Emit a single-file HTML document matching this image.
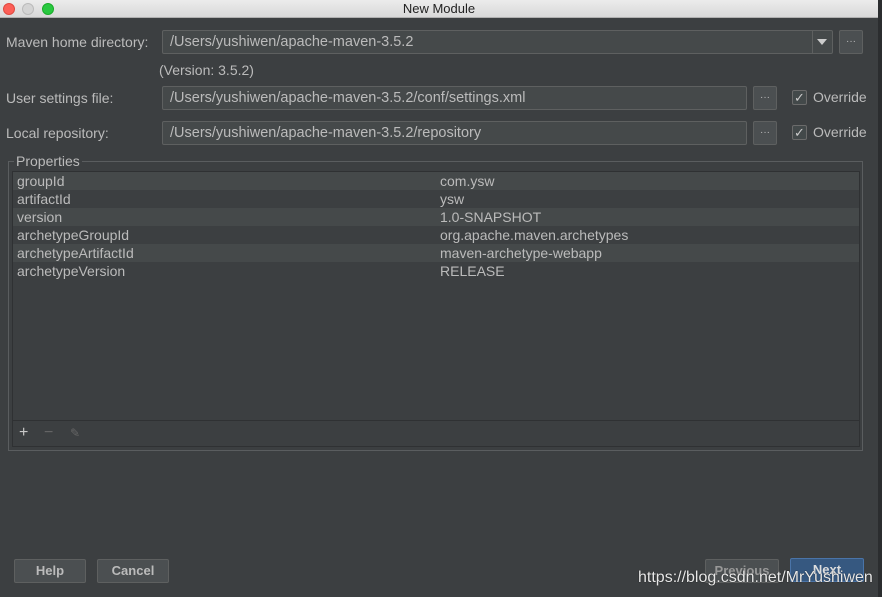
<!DOCTYPE html>
<html><head><style>
*{box-sizing:border-box;margin:0;padding:0}
body{width:882px;height:597px;background:#2b2d2f;font-family:"Liberation Sans",sans-serif;font-size:14px;color:#bbbbbb;position:relative;overflow:hidden}
.win{position:absolute;left:0;top:0;width:878px;height:597px;background:#3c3f41}
.title{position:absolute;left:0;top:0;width:878px;height:18px;background:linear-gradient(#ececec,#d8d8d8);border-bottom:1px solid #b0b0b0;color:#222;text-align:center;font-size:13px;line-height:18px}
.dot{position:absolute;top:3px;width:12px;height:12px;border-radius:50%}
.a{position:absolute}
.field{position:absolute;background:#45494a;border:1px solid #5e6060;border-radius:2px;height:24px;line-height:22px;padding-left:7px;color:#bbb;font-size:14.5px}
.btn{position:absolute;background:#4b4f51;border:1px solid #5e6060;border-radius:2px;height:24px;text-align:center;line-height:22px;color:#bbb;font-size:13px}
.chk{position:absolute;width:15px;height:15px;border:1px solid #6b6b6b;background:#43494a;border-radius:2px;font-size:13px;line-height:13px;text-align:center;color:#ccc}
.row{position:absolute;left:13px;width:846px;height:18px;line-height:18px}
.row span{position:absolute}
</style></head><body>
<div class="win">
<div class="title">New Module
<div class="dot" style="left:3px;background:#fc5f57;border:1px solid #de4a41"></div>
<div class="dot" style="left:22px;background:#d4d4d4;border:1px solid #bbb"></div>
<div class="dot" style="left:42px;background:#29c840;border:1px solid #1aab29"></div>
</div>
<div class="a" style="left:6px;top:34px">Maven home directory:</div>
<div class="field" style="left:162px;top:30px;width:671px">/Users/yushiwen/apache-maven-3.5.2</div>
<div class="a" style="left:812px;top:31px;width:20px;height:22px;border-left:1px solid #5e6060"></div>
<div class="a" style="left:817px;top:39px;width:0;height:0;border-left:5px solid transparent;border-right:5px solid transparent;border-top:6px solid #ccc"></div>
<div class="btn" style="left:839px;top:30px;width:24px;font-size:10px">···</div>
<div class="a" style="left:159px;top:62px">(Version: 3.5.2)</div>
<div class="a" style="left:6px;top:90px">User settings file:</div>
<div class="field" style="left:162px;top:86px;width:585px">/Users/yushiwen/apache-maven-3.5.2/conf/settings.xml</div>
<div class="btn" style="left:753px;top:86px;width:24px;font-size:10px">···</div>
<div class="chk" style="left:792px;top:90px">✓</div>
<div class="a" style="left:813px;top:89px">Override</div>
<div class="a" style="left:6px;top:125px">Local repository:</div>
<div class="field" style="left:162px;top:121px;width:585px">/Users/yushiwen/apache-maven-3.5.2/repository</div>
<div class="btn" style="left:753px;top:121px;width:24px;font-size:10px">···</div>
<div class="chk" style="left:792px;top:125px">✓</div>
<div class="a" style="left:813px;top:124px">Override</div>
<div class="a" style="left:8px;top:161px;width:855px;height:290px;border:1px solid #5a5d5f"></div>
<div class="a" style="left:14px;top:153px;background:#3c3f41;padding:0 2px">Properties</div>
<div class="a" style="left:12px;top:171px;width:848px;height:276px;border:1px solid #2f3133;background:#3c3f41"></div>
<div class="row" style="top:172px;background:#45494a"><span style="left:4px">groupId</span><span style="left:427px">com.ysw</span></div>
<div class="row" style="top:190px"><span style="left:4px">artifactId</span><span style="left:427px">ysw</span></div>
<div class="row" style="top:208px;background:#45494a"><span style="left:4px">version</span><span style="left:427px">1.0-SNAPSHOT</span></div>
<div class="row" style="top:226px"><span style="left:4px">archetypeGroupId</span><span style="left:427px">org.apache.maven.archetypes</span></div>
<div class="row" style="top:244px;background:#45494a"><span style="left:4px">archetypeArtifactId</span><span style="left:427px">maven-archetype-webapp</span></div>
<div class="row" style="top:262px"><span style="left:4px">archetypeVersion</span><span style="left:427px">RELEASE</span></div>
<div class="a" style="left:13px;top:420px;width:846px;height:1px;background:#2f3133"></div>
<div class="a" style="left:19px;top:424px;font-size:16px;color:#c8c8c8">+</div>
<div class="a" style="left:44px;top:424px;font-size:16px;color:#666">−</div>
<div class="a" style="left:70px;top:426px;font-size:12px;color:#666">✎</div>
<div class="btn" style="left:14px;top:559px;width:72px;font-weight:bold">Help</div>
<div class="btn" style="left:97px;top:559px;width:72px;font-weight:bold">Cancel</div>
<div class="btn" style="left:705px;top:559px;width:74px;font-weight:bold;color:#999">Previous</div>
<div class="btn" style="left:790px;top:558px;width:74px;background:#365880;border:1px solid #4a74a8;font-weight:bold;color:#ddd">Next</div>
<div class="a" style="left:638px;top:569px;font-size:16px;color:#e8e8e8;text-shadow:0 0 1px #000">https://blog.csdn.net/MrYushiwen</div>
</div>
</body></html>
